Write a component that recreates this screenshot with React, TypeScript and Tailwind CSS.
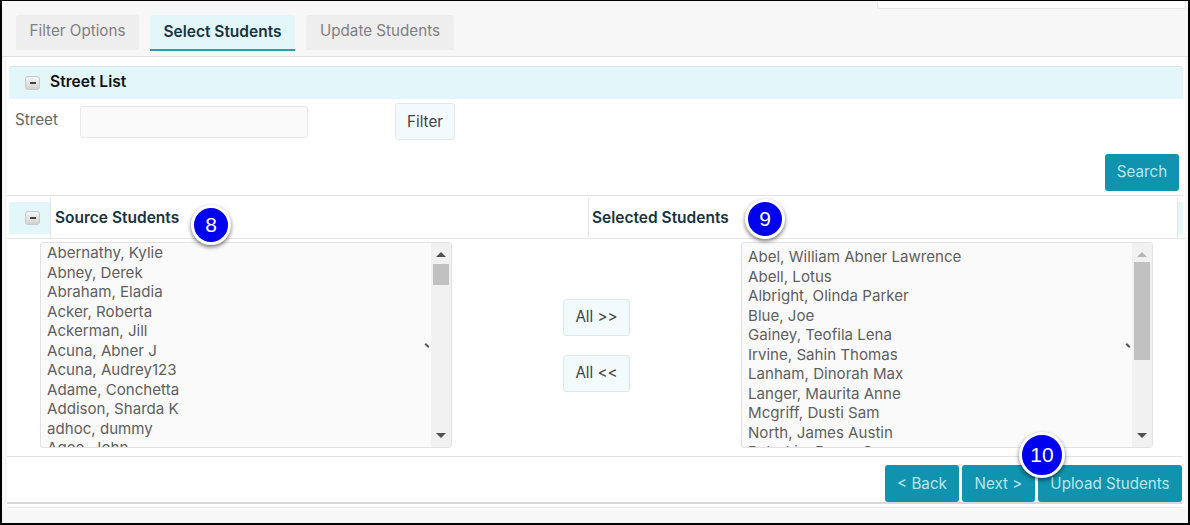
const sourceStudents = [
  "Abernathy, Kylie",
  "Abney, Derek",
  "Abraham, Eladia",
  "Acker, Roberta",
  "Ackerman, Jill",
  "Acuna, Abner J",
  "Acuna, Audrey123",
  "Adame, Conchetta",
  "Addison, Sharda K",
  "adhoc, dummy",
  "Agee, John",
];

const selectedStudents = [
  "Abel, William Abner Lawrence",
  "Abell, Lotus",
  "Albright, Olinda Parker",
  "Blue, Joe",
  "Gainey, Teofila Lena",
  "Irvine, Sahin Thomas",
  "Lanham, Dinorah Max",
  "Langer, Maurita Anne",
  "Mcgriff, Dusti Sam",
  "North, James Austin",
  "Peterkin, Bessy S",
];

function Collapse() {
  return (
    <span className="flex h-[14px] w-[15px] items-center justify-center rounded-[3px] border border-[#c9c9c9] bg-gradient-to-b from-[#f5f5f5] to-[#d2d2d2]">
      <span className="h-[2px] w-[6px] bg-[#444]" />
    </span>
  );
}

function Badge({ label, className }: { label: string; className: string }) {
  return (
    <div
      className={`absolute flex items-center justify-center rounded-full border-[3px] border-white bg-[#0000f0] font-['Liberation_Sans',sans-serif] text-[21px] text-white shadow-[0_2px_4px_rgba(0,0,0,0.55)] ${className}`}
    >
      {label}
    </div>
  );
}

function ListBox({
  names,
  pad,
  thumbTop,
  thumbHeight,
  upColor,
}: {
  names: string[];
  pad: string;
  thumbTop: string;
  thumbHeight: string;
  upColor: string;
}) {
  return (
    <div className="relative flex h-[206px] w-[412px] overflow-hidden rounded-[3px] border border-[#e2e2e2] bg-[#fafafa]">
      <div className={`min-w-0 flex-1 overflow-hidden pl-[6px] text-[15.1px] leading-[19.5px] text-[#5f5f5f] ${pad}`}>
        {names.map((name) => (
          <div key={name} className="whitespace-nowrap">{name}</div>
        ))}
      </div>
      <span className="absolute right-[23px] top-[100px] h-[5px] w-[2px] -rotate-45 bg-[#555]" />
      <div className="relative w-[20px] bg-[#f1f1f1]">
        <span className={`absolute left-[5px] top-[9px] h-0 w-0 border-x-[5px] border-b-[5px] border-x-transparent ${upColor}`} />
        <div className={`absolute left-[2px] w-[16px] bg-[#c1c1c1] ${thumbTop} ${thumbHeight}`} />
        <span className="absolute bottom-[9px] left-[5px] h-0 w-0 border-x-[5px] border-t-[5px] border-x-transparent border-t-[#505050]" />
      </div>
    </div>
  );
}

export default function App() {
  return (
    <div className="relative flex h-[525px] w-[1190px] flex-col overflow-hidden border-x-2 border-b-2 border-t border-black bg-[#f7f7f7] font-['Inter',sans-serif]">
      <div className="flex h-[8px] justify-end pr-[2px]">
        <div className="w-[309px] rounded-b-[3px] border border-t-0 border-[#e8e8e8] bg-white" />
      </div>

      {/* tabs */}
      <div className="flex h-[48px] gap-[11px] border-b border-[#e2e2e2] pl-[14px] pt-[6px] text-[15.2px]">
        <div className="flex h-[35px] w-[123px] items-center justify-center rounded-t-[3px] bg-[#eeeeee] pb-[2px] text-[#808080]">Filter Options</div>
        <div className="flex h-[36px] w-[145px] items-center justify-center rounded-t-[3px] border-b-2 border-[#2a9cab] bg-[#e3f6fa] pb-[1px] text-[15.5px] font-semibold text-[#173440]">Select Students</div>
        <div className="flex h-[35px] w-[148px] items-center justify-center rounded-t-[3px] bg-[#eeeeee] pb-[2px] text-[#808080]">Update Students</div>
      </div>

      <div className="ml-[5px] mr-[3px] flex flex-1 flex-col bg-white">
        {/* street panel */}
        <div className="mr-[2px] mt-[9px] border-b border-[#e2e2e2]">
          <div className="ml-[2px] flex h-[33px] items-center gap-[10px] rounded-t-[3px] border-t border-[#d8e8eb] bg-[#e3f6fa] pl-[16px] text-[15.6px] font-semibold text-[#111]">
            <Collapse />
            <span className="pb-[2px]">Street List</span>
          </div>
          <div className="flex h-[46px] items-center text-[15.2px] text-[#666]">
            <span className="ml-[8px] w-[65px] pb-[3px]">Street</span>
            <div className="mb-[1px] h-[32px] w-[228px] rounded-[3px] border border-[#e8e8e8] bg-[#fafafa]" />
            <button className="mb-[1px] ml-[87px] h-[37px] w-[60px] rounded-[3px] border border-[#e0e8ea] bg-[#f3fafb] pt-[1px] text-[#444]">Filter</button>
          </div>
          <div className="flex h-[50px] justify-end pr-[4px] pt-[9px]">
            <button className="h-[37px] w-[74px] rounded-[3px] bg-[#0f93ae] text-[15.2px] text-[#b9e6ee]">Search</button>
          </div>
        </div>

        {/* students panel */}
        <div className="mt-[2px] flex h-[41px] border-b border-[#e6e6e6]">
          <div className="ml-[2px] mt-[4px] flex h-[32px] w-[41px] items-center rounded-tl-[3px] bg-[#e3f6fa] pl-[16px]">
            <Collapse />
          </div>
          <div className="flex w-[539px] items-center border-x border-[#e6e6e6] pl-[4px] text-[15.5px] font-semibold text-[#173440]">Source Students</div>
          <div className="flex w-[589px] items-center border-r border-[#e6e6e6] pl-[3px] text-[15.5px] font-semibold text-[#173440]">Selected Students</div>
          <div className="mt-[4px] h-[32px] w-[5px] rounded-tr-[3px] bg-[#e3f6fa]" />
        </div>

        <div className="flex items-start pt-[3px]">
          <div className="ml-[33px]">
            <ListBox names={sourceStudents} pad="pt-0" thumbTop="top-[21px]" thumbHeight="h-[21px]" upColor="border-b-[#505050]" />
          </div>
          <div className="ml-[111px] mt-[57px] flex w-[67px] flex-col gap-[19px] text-[15.2px] text-[#444]">
            <button className="h-[37px] rounded-[3px] border border-[#e0e8ea] bg-[#f3fafb]">All &gt;&gt;</button>
            <button className="h-[37px] rounded-[3px] border border-[#e0e8ea] bg-[#f3fafb]">All &lt;&lt;</button>
          </div>
          <div className="ml-[111px]">
            <ListBox names={selectedStudents} pad="pt-[4px]" thumbTop="top-[19px]" thumbHeight="h-[98px]" upColor="border-b-[#b5b5b5]" />
          </div>
        </div>

        <div className="mr-[3px] mt-[8px] flex h-[48px] items-start justify-end gap-[3px] border-t border-b-2 border-t-[#e2e2e2] border-b-[#d8d8d8] pt-[8px] text-[15.2px] text-[#b9e6ee]">
          <button className="h-[37px] w-[74px] rounded-[3px] bg-[#0f93ae] pt-[1px]">&lt; Back</button>
          <button className="h-[37px] w-[73px] rounded-[3px] bg-[#0f93ae] pt-[1px]">Next &gt;</button>
          <button className="h-[37px] w-[144px] rounded-[3px] bg-[#0f93ae] pt-[1px]">Upload Students</button>
        </div>
        <div className="mr-[3px] mt-[3px] border-t border-[#e8e8e8]" />
      </div>
      <div className="h-[14px] bg-[#f7f7f7]" />

      <Badge label="8" className="left-[189px] top-[204px] h-[40px] w-[40px]" />
      <Badge label="9" className="left-[743px] top-[198px] h-[40px] w-[40px]" />
      <Badge label="10" className="left-[1017px] top-[431px] h-[46px] w-[46px]" />
    </div>
  );
}
